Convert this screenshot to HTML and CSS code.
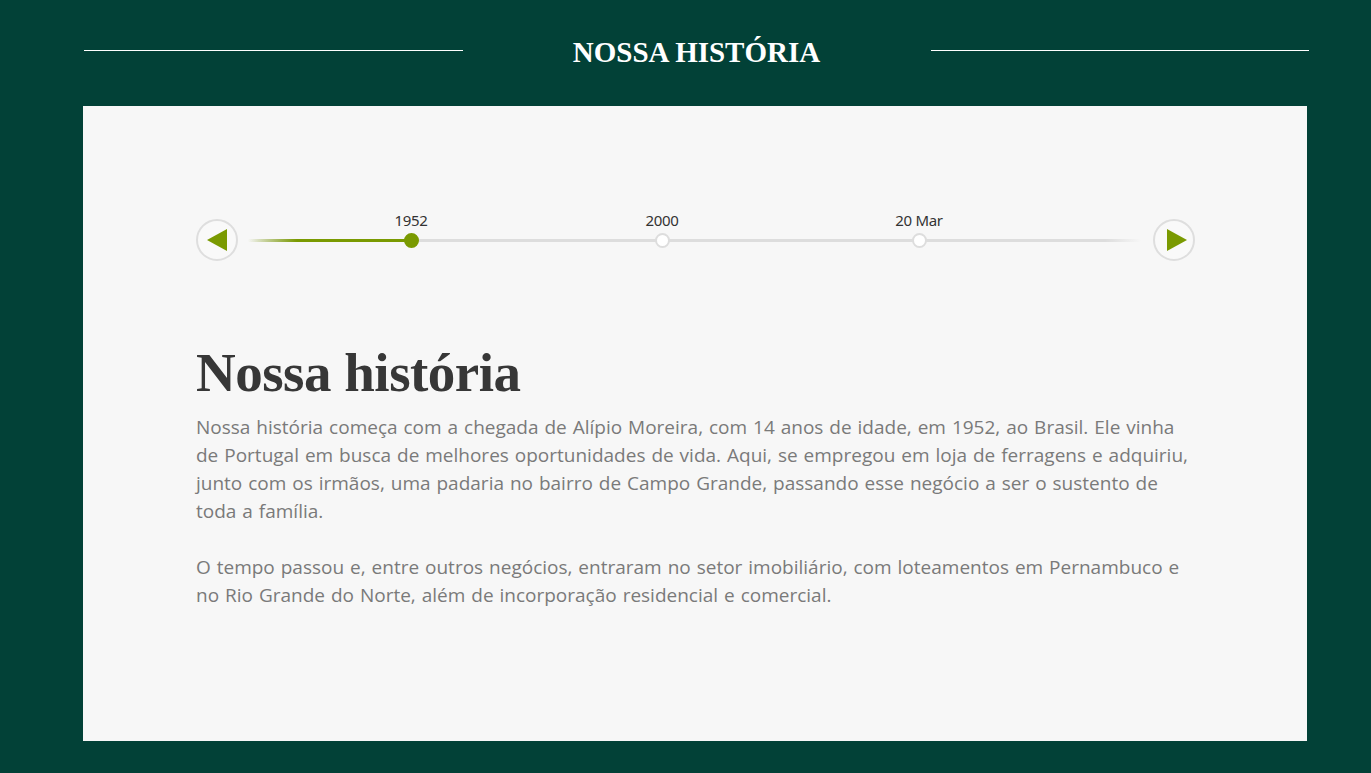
FILE: index.html
```html
<!DOCTYPE html>
<html lang="pt">
<head>
<meta charset="utf-8">
<title>Nossa História</title>
<link rel="stylesheet" href="styles.css">
</head>
<body>
<div class="page">
  <header class="section-head">
    <span class="rule"></span>
    <h2 class="section-title">NOSSA HISTÓRIA</h2>
    <span class="rule"></span>
  </header>
  <main class="card">
    <div class="timeline">
      <button class="nav prev" aria-label="Anterior">
        <svg width="24" height="24" viewBox="0 0 24 24"><polygon points="2,12 22,1 22,23" fill="#7a9a01"/></svg>
      </button>
      <div class="track">
        <div class="line"></div>
        <div class="progress" style="width:163px"></div>
        <div class="event active" style="left:163px"><span class="label">1952</span><span class="dot"></span></div>
        <div class="event" style="left:414px"><span class="label">2000</span><span class="dot"></span></div>
        <div class="event" style="left:671px"><span class="label">20 Mar</span><span class="dot"></span></div>
      </div>
      <button class="nav next" aria-label="Próximo">
        <svg width="24" height="24" viewBox="0 0 24 24"><polygon points="3,1 23,12 3,23" fill="#7a9a01"/></svg>
      </button>
    </div>
    <article class="content">
      <h1 class="heading">Nossa história</h1>
      <p class="text">Nossa história começa com a chegada de Alípio Moreira, com 14 anos de idade, em 1952, ao Brasil. Ele vinha de Portugal em busca de melhores oportunidades de vida. Aqui, se empregou em loja de ferragens e adquiriu, junto com os irmãos, uma padaria no bairro de Campo Grande, passando esse negócio a ser o sustento de toda a família.</p>
      <p class="text">O tempo passou e, entre outros negócios, entraram no setor imobiliário, com loteamentos em Pernambuco e no Rio Grande do Norte, além de incorporação residencial e comercial.</p>
    </article>
  </main>
</div>
</body>
</html>
```
FILE: styles.css
```css
* { box-sizing: border-box; }
html, body { margin: 0; padding: 0; }
body {
  background: #024137;
  font-family: "Open Sans", "Noto Sans", sans-serif;
  height: 773px;
  overflow: hidden;
}
.page {
  padding-left: 83px;
  width: 1309px;
}
.section-head {
  display: flex;
  align-items: center;
  height: 106px;
  padding-left: 1px;
  padding-bottom: 6px;
}
.rule {
  flex: 1;
  height: 1px;
  background: #ffffff;
}
.section-title {
  margin: 0;
  padding-top: 4px;
  width: 468px;
  text-align: center;
  color: #ffffff;
  font-family: "Liberation Serif", "DejaVu Serif", serif;
  font-weight: bold;
  font-size: 29px;
  line-height: 34px;
}
.card {
  width: 1224px;
  height: 635px;
  background: #f7f7f7;
  padding: 112px 112px 0 113px;
}
.timeline {
  display: flex;
  align-items: center;
  height: 44px;
}
.nav {
  width: 42px;
  height: 42px;
  border: 2px solid #dedede;
  border-radius: 50%;
  background: #f9f9f9;
  padding: 0;
  display: flex;
  align-items: center;
  justify-content: center;
  flex: none;
}
.nav.prev svg { margin-left: -1px; }
.nav.next svg { margin-left: 3px; }
.track {
  position: relative;
  flex: 1;
  height: 44px;
  margin: 0 12px 0 10px;
}
.line {
  position: absolute;
  left: 0; right: 0; top: 21px;
  height: 3px;
  background: linear-gradient(to right, rgba(221,221,221,0), #dddddd 6%, #dddddd 96%, rgba(221,221,221,0));
}
.progress {
  position: absolute;
  left: 0; top: 21px;
  height: 3px;
  background: linear-gradient(to right, rgba(122,154,1,0), #7a9a01 30%, #7a9a01);
}
.event {
  position: absolute;
  top: 0;
  width: 0;
  height: 44px;
}
.label {
  position: absolute;
  top: -8px;
  left: 0;
  transform: translateX(-50%);
  white-space: nowrap;
  font-size: 15px;
  color: #333333;
  font-family: "Noto Sans", "Open Sans", sans-serif;
  letter-spacing: -0.3px;
}
.dot {
  position: absolute;
  left: -7px;
  top: 15px;
  width: 15px;
  height: 15px;
  border-radius: 50%;
  background: #ffffff;
  border: 2px solid #dddddd;
}
.event.active .dot {
  background: #7a9a01;
  border-color: #7a9a01;
}
.content {
  padding-top: 82px;
  width: 1003px;
}
.heading {
  margin: 0 0 11px;
  font-family: "Liberation Serif", "DejaVu Serif", serif;
  font-weight: bold;
  font-size: 55px;
  line-height: 58px;
  color: #373737;
  letter-spacing: -0.5px;
}
.text {
  margin: 0 0 28px;
  font-size: 19px;
  line-height: 28px;
  color: #7a7a7a;
  letter-spacing: 0;
  word-spacing: 1px;
}
```
